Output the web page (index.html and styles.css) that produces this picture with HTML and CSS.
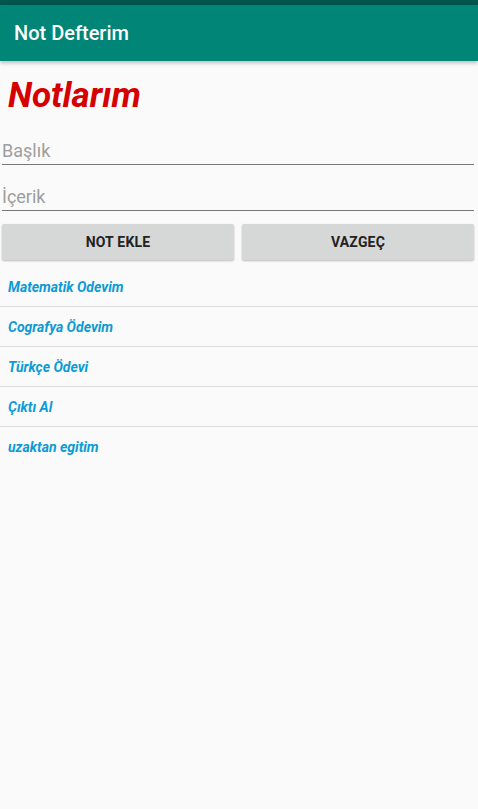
FILE: index.html
```html
<!DOCTYPE html>
<html lang="tr">
<head>
<meta charset="utf-8">
<link rel="stylesheet" href="styles.css">
</head>
<body>
<div class="statusbar"></div>
<header class="toolbar"><span class="toolbar-title">Not Defterim</span></header>
<main class="content">
  <h1 class="heading">Notlarım</h1>
  <div class="field"><input class="input" type="text" placeholder="Başlık"></div>
  <div class="field"><input class="input" type="text" placeholder="İçerik"></div>
  <div class="buttons">
    <button class="btn">NOT EKLE</button>
    <button class="btn">VAZGEÇ</button>
  </div>
  <ul class="list">
    <li class="item">Matematik Odevim</li>
    <li class="item">Cografya Ödevim</li>
    <li class="item">Türkçe Ödevi</li>
    <li class="item">Çıktı Al</li>
    <li class="item last">uzaktan egitim</li>
  </ul>
</main>
</body>
</html>
```
FILE: styles.css
```css
* { box-sizing: border-box; }
html, body { margin: 0; padding: 0; }
body {
  width: 478px;
  height: 809px;
  background: #fafafa;
  font-family: Roboto, "Noto Sans", sans-serif;
  overflow: hidden;
}
.statusbar { height: 5px; background: #00574b; }
.toolbar {
  height: 56px;
  background: #008577;
  display: flex;
  align-items: center;
  padding-left: 14px;
  box-shadow: 0 2px 4px rgba(0,0,0,0.25);
  position: relative;
  z-index: 1;
}
.toolbar-title {
  color: #fff;
  font-size: 20px;
  font-weight: 500;
}
.content { padding: 0 4px 0 2px; }
.heading {
  margin: 0;
  padding: 15px 0 0 6px;
  height: 58px;
  font-size: 35px;
  line-height: 40px;
  font-weight: 700;
  font-style: italic;
  color: #d50000;
}
.field { height: 46px; display: flex; align-items: flex-end; }
.input {
  width: 100%;
  border: none;
  border-bottom: 1px solid #777;
  background: transparent;
  font-family: Roboto, sans-serif;
  font-size: 18px;
  padding: 0 0 1px 0;
  height: 28px;
  outline: none;
  color: #222;
}
.input::placeholder { color: #9e9e9e; }
.buttons {
  display: flex;
  gap: 8px;
  margin-top: 13px;
}
.btn {
  flex: 1;
  height: 36px;
  border: none;
  border-radius: 2px;
  background: #d6d7d7;
  box-shadow: 0 1px 2px rgba(0,0,0,0.25);
  font-family: Roboto, sans-serif;
  font-weight: 700;
  font-size: 14px;
  color: #222;
  letter-spacing: 0.2px;
}
.list { list-style: none; margin: 7px -4px 0 -2px; padding: 0; }
.item {
  height: 40px;
  line-height: 40px;
  padding-left: 8px;
  font-size: 14px;
  font-weight: 700;
  font-style: italic;
  color: #0b9bd6;
  border-bottom: 1px solid #dcdcdc;
}
.item.last { border-bottom: none; }
```
